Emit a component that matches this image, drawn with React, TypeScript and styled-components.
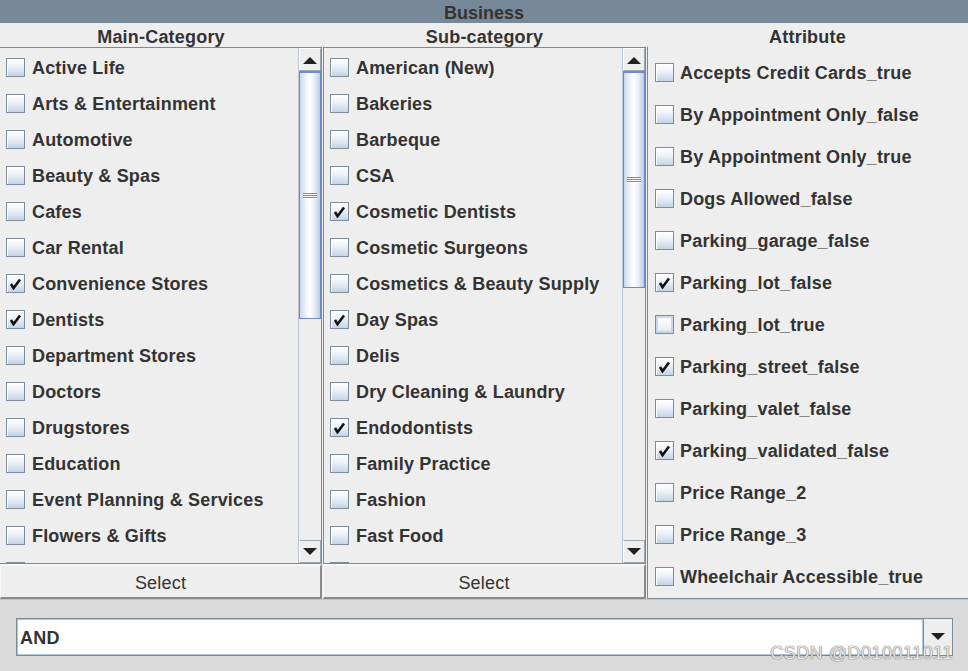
import React from 'react';
import styled, {createGlobalStyle} from 'styled-components';

const GlobalStyle = createGlobalStyle`
  html, body {
    margin: 0;
    padding: 0;
    background: #eeeeee;
  }
  body {
    font-family: "Liberation Sans", Arial, sans-serif;
    color: #333333;
  }
`;

type Item = {label: string; checked?: boolean; hover?: boolean; partial?: boolean};

const mainCategories: Item[] = [
  {label: 'Active Life'},
  {label: 'Arts & Entertainment'},
  {label: 'Automotive'},
  {label: 'Beauty & Spas'},
  {label: 'Cafes'},
  {label: 'Car Rental'},
  {label: 'Convenience Stores', checked: true},
  {label: 'Dentists', checked: true},
  {label: 'Department Stores'},
  {label: 'Doctors'},
  {label: 'Drugstores'},
  {label: 'Education'},
  {label: 'Event Planning & Services'},
  {label: 'Flowers & Gifts'},
  {label: 'Food', partial: true},
];

const subCategories: Item[] = [
  {label: 'American (New)'},
  {label: 'Bakeries'},
  {label: 'Barbeque'},
  {label: 'CSA'},
  {label: 'Cosmetic Dentists', checked: true},
  {label: 'Cosmetic Surgeons'},
  {label: 'Cosmetics & Beauty Supply'},
  {label: 'Day Spas', checked: true},
  {label: 'Delis'},
  {label: 'Dry Cleaning & Laundry'},
  {label: 'Endodontists', checked: true},
  {label: 'Family Practice'},
  {label: 'Fashion'},
  {label: 'Fast Food'},
  {label: 'Florists', partial: true},
];

const attributes: Item[] = [
  {label: 'Accepts Credit Cards_true'},
  {label: 'By Appointment Only_false'},
  {label: 'By Appointment Only_true'},
  {label: 'Dogs Allowed_false'},
  {label: 'Parking_garage_false'},
  {label: 'Parking_lot_false', checked: true},
  {label: 'Parking_lot_true', hover: true},
  {label: 'Parking_street_false', checked: true},
  {label: 'Parking_valet_false'},
  {label: 'Parking_validated_false', checked: true},
  {label: 'Price Range_2'},
  {label: 'Price Range_3'},
  {label: 'Wheelchair Accessible_true'},
];

const CheckMark = () => (
  <svg width="13" height="13" viewBox="0 0 13 13">
    <path d="M2 7 L4.5 11.2 L11 2.5" fill="none" stroke="#111" strokeWidth="2.6" />
  </svg>
);

// a row that only peeks out under the viewport shows its box and nothing else
const CheckItem: React.FC<{item: Item; $tall?: boolean}> = ({item, $tall}) => (
  <Row $tall={$tall}>
    <Box $hover={item.hover}>{item.checked && <CheckMark />}</Box>
    {!item.partial && <Label>{item.label}</Label>}
  </Row>
);

const Arrow: React.FC<{down?: boolean}> = ({down}) => (
  <svg width="14" height="8" viewBox="0 0 14 8">
    {down ? <polygon points="0,0 14,0 7,7" fill="#222" /> : <polygon points="0,8 14,8 7,1" fill="#222" />}
  </svg>
);

const ScrollColumn: React.FC<{title: string; items: Item[]; thumb: number; flush?: boolean}> = ({
  title,
  items,
  thumb,
  flush,
}) => (
  <Column>
    <ColumnHeader>{title}</ColumnHeader>
    <ScrollPane $flush={flush}>
      <ListView>
        {items.map(item => (
          <CheckItem key={item.label} item={item} />
        ))}
      </ListView>
      <ScrollBar>
        <ArrowButton>
          <Arrow />
        </ArrowButton>
        <Track>
          <Thumb style={{height: thumb}}>
            <Grip />
          </Thumb>
        </Track>
        <ArrowButton $bottom>
          <Arrow down />
        </ArrowButton>
      </ScrollBar>
    </ScrollPane>
    <SelectButton>Select</SelectButton>
  </Column>
);

export default function App() {
  return (
    <Frame>
      <GlobalStyle />
      <TitleBar>Business</TitleBar>
      <Columns>
        <ScrollColumn title="Main-Category" items={mainCategories} thumb={248} flush />
        <ScrollColumn title="Sub-category" items={subCategories} thumb={217} />
        <Column>
          <ColumnHeader>Attribute</ColumnHeader>
          <AttributePanel>
            {attributes.map(item => (
              <CheckItem key={item.label} item={item} $tall />
            ))}
          </AttributePanel>
        </Column>
      </Columns>
      <Footer>
        <Combo>
          <ComboField>AND</ComboField>
          <ComboButton>
            <Arrow down />
          </ComboButton>
        </Combo>
      </Footer>
      <Watermark>CSDN @D010011011</Watermark>
    </Frame>
  );
}

const Frame = styled.div`
  position: relative;
  width: 968px;
  height: 671px;
  display: flex;
  flex-direction: column;
  overflow: hidden;
  background: #eeeeee;
`;

const TitleBar = styled.div`
  height: 23px;
  flex: none;
  background: #778899;
  font-weight: bold;
  font-size: 18px;
  line-height: 26px;
  text-align: center;
  color: #333;
`;

const Columns = styled.div`
  height: 576px;
  flex: none;
  display: grid;
  grid-template-columns: 322px 323px 1fr;
  column-gap: 1px;
`;

const Column = styled.div`
  display: flex;
  flex-direction: column;
  min-width: 0;
`;

const ColumnHeader = styled.div`
  height: 24px;
  flex: none;
  font-weight: bold;
  font-size: 18px;
  line-height: 28px;
  text-align: center;
  color: #333;
  letter-spacing: 0.2px;
`;

const ScrollPane = styled.div<{$flush?: boolean}>`
  height: 517px;
  flex: none;
  display: flex;
  box-sizing: border-box;
  border-top: 1px solid #7a8a99;
  border-bottom: 1px solid #7a8a99;
  border-left: ${p => (p.$flush ? 'none' : '1px solid #7a8a99')};
`;

const ListView = styled.div`
  flex: 1;
  overflow: hidden;
  padding-top: 1px;
`;

const Row = styled.div<{$tall?: boolean}>`
  height: ${p => (p.$tall ? 42 : 36)}px;
  display: flex;
  align-items: center;
  gap: ${p => (p.$tall ? 6 : 7)}px;
  padding-left: 6px;
  white-space: nowrap;
`;

const Box = styled.span<{$hover?: boolean}>`
  width: 19px;
  height: 19px;
  flex: none;
  box-sizing: border-box;
  display: flex;
  align-items: center;
  justify-content: center;
  border: 1px solid #7d8d9c;
  background: ${p =>
    p.$hover
      ? 'linear-gradient(to bottom, #ffffff 0%, #f4f7fa 50%, #dde6f0 100%)'
      : 'linear-gradient(to bottom, #ffffff 0%, #eef3f9 40%, #c3d4e7 100%)'};
  box-shadow: ${p => (p.$hover ? 'inset 0 0 0 2px #c8d7e8' : 'inset 1px 1px 0 #ffffff')};
`;

const Label = styled.span`
  font-weight: bold;
  font-size: 18px;
  letter-spacing: 0.18px;
  color: #333;
  margin-top: 3px;
`;

const ScrollBar = styled.div`
  width: 24px;
  flex: none;
  display: flex;
  flex-direction: column;
  box-sizing: border-box;
  border-left: 1px solid #b8c4d0;
  border-right: 1px solid #7a8a99;
`;

const ArrowButton = styled.div<{$bottom?: boolean}>`
  height: 23px;
  flex: none;
  box-sizing: border-box;
  display: flex;
  align-items: center;
  justify-content: center;
  background: #eeeeee;
  border: 1px solid #ffffff;
  border-right-color: #9aa6b2;
  border-bottom-color: #9aa6b2;
  ${p => (p.$bottom ? 'border-top: 1px solid #9aa6b2;' : '')}
`;

const Track = styled.div`
  flex: 1;
  background: #eeeeee;
`;

const Thumb = styled.div`
  box-sizing: border-box;
  display: flex;
  align-items: center;
  justify-content: center;
  border: 1px solid #6d8bc6;
  border-top-width: 2px;
  background: linear-gradient(to right, #c9d8ec 0%, #eef3fa 30%, #ffffff 50%, #e3ebf5 75%, #b9cce6 100%);
`;

const Grip = styled.div`
  width: 14px;
  height: 6px;
  background: repeating-linear-gradient(to bottom, #6d8bc6 0px, #6d8bc6 1px, #ffffff 1px, #ffffff 2px);
`;

const SelectButton = styled.div`
  height: 35px;
  flex: none;
  box-sizing: border-box;
  display: flex;
  align-items: center;
  justify-content: center;
  padding-top: 3px;
  background: #eeeeee;
  border-top: 2px solid #f7f7f7;
  border-left: 1px solid #f7f7f7;
  border-right: 2px solid #8a8a8a;
  border-bottom: 2px solid #8a8a8a;
  font-size: 18px;
  letter-spacing: 0.2px;
  color: #333;
`;

const AttributePanel = styled.div`
  flex: 1;
  box-sizing: border-box;
  border-left: 1px solid #7a8a99;
  border-bottom: 1px solid #7a8a99;
  padding: 4px 0 0 1px;
`;

const Footer = styled.div`
  flex: 1;
  background: #dadada;
  border-top: 1px solid #c4c4c4;
  padding: 18px 15px 0 16px;
`;

const Combo = styled.div`
  height: 38px;
  display: flex;
  box-sizing: border-box;
  border: 1px solid #7a8a99;
  background: #ffffff;
`;

const ComboField = styled.div`
  flex: 1;
  display: flex;
  align-items: center;
  padding: 3px 0 0 2px;
  box-sizing: border-box;
  border: 1px solid #b0c4dc;
  font-weight: bold;
  font-size: 18px;
  letter-spacing: 0.3px;
  color: #333;
`;

const ComboButton = styled.div`
  width: 28px;
  flex: none;
  display: flex;
  align-items: center;
  justify-content: center;
  background: #eeeeee;
  border-left: 1px solid #7a8a99;
`;

const Watermark = styled.div`
  position: absolute;
  right: 15px;
  bottom: 7px;
  font-size: 18px;
  letter-spacing: 0.5px;
  color: #e6e6e6;
  text-shadow: 0 0 1px #666, 0 0 1px #666;
`;
